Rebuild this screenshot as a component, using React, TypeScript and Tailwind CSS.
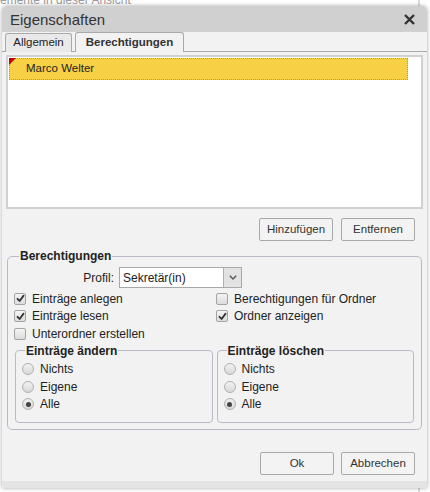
import React from 'react';

const font = { fontFamily: '"Liberation Sans", Arial, sans-serif' };

// Small check glyph used inside the checkboxes
const CheckMark = () => (
  <svg width="9" height="9" viewBox="0 0 9 9" className="block">
    <path d="M1.5 4.8 L3.6 7 L7.6 1.6" fill="none" stroke="#333" strokeWidth="1.8" strokeLinecap="round" strokeLinejoin="round" />
  </svg>
);

const Checkbox = ({ label, checked = false }: { label: string; checked?: boolean }) => (
  <label className="flex items-center gap-[6px] h-[17.5px] text-[12px] text-[#222]">
    <span className="w-[12px] h-[12px] rounded-[2px] border border-[#a4a4a4] bg-gradient-to-b from-[#f4f4f4] to-[#dcdcdc] flex items-center justify-center">
      {checked && <CheckMark />}
    </span>
    {label}
  </label>
);

const Radio = ({ label, checked = false }: { label: string; checked?: boolean }) => (
  <label className="flex items-center gap-[6px] h-[17.5px] text-[12px] text-[#222]">
    <span className="w-[12px] h-[12px] rounded-full border border-[#b0b0b0] bg-gradient-to-b from-[#f2f2f2] to-[#d8d8d8] flex items-center justify-center">
      {checked && <span className="w-[5px] h-[5px] rounded-full bg-[#444]" />}
    </span>
    {label}
  </label>
);

const Button = ({ children }: { children: React.ReactNode }) => (
  <button
    type="button"
    className="w-[74px] h-[23px] border border-[#a8a8a8] rounded-[2px] bg-[#f3f3f3] text-[11.5px] text-[#333]"
  >
    {children}
  </button>
);

const RadioGroup = ({ title }: { title: string }) => (
  <fieldset className="flex-1 border border-[#b9b9c9] rounded-[4px] pl-[6px] h-[79px]">
    <legend className="ml-[3px] px-[1px] text-[12px] font-bold text-[#222] leading-[14px]">{title}</legend>
    <div className="flex flex-col mt-[3px]">
      <Radio label="Nichts" />
      <Radio label="Eigene" />
      <Radio label="Alle" checked />
    </div>
  </fieldset>
);

export default function App() {
  return (
    <div className="relative w-[430px] h-[492px] bg-white overflow-hidden" style={font}>
      {/* page behind the dialog */}
      <div className="absolute left-0 top-[-7px] text-[12px] leading-[14px] text-[#9a9a9a]">emente in dieser Ansicht</div>
      <div className="absolute left-[418px] top-0 w-[2px] h-[492px] bg-[#dcdcdc]" />

      {/* dialog */}
      <div className="absolute left-[2px] top-[6px] w-[425px] h-[482px] flex flex-col bg-[#f2f2f2] rounded-t-[5px] shadow-[0_0_4px_rgba(0,0,0,0.35)] overflow-hidden">
        {/* title bar */}
        <div className="h-[26px] shrink-0 flex items-center justify-between pl-[8px] pr-[12px] bg-[#d0d0d0]">
          <span className="text-[15px] text-[#333] leading-none">Eigenschaften</span>
          <svg width="11" height="11" viewBox="0 0 11 11">
            <path d="M1 1 L10 10 M10 1 L1 10" stroke="#333" strokeWidth="2.4" />
          </svg>
        </div>

        {/* tabs */}
        <div className="h-[20px] shrink-0 flex items-end gap-[3px] pl-[3px] border-b border-[#a9a9a9]">
          <div className="h-[19px] w-[67px] flex items-center justify-center border border-b-0 border-[#a9a9a9] rounded-t-[3px] bg-[#e9e9e9] text-[11.5px] text-[#222] mb-[-1px] pb-[1px]">
            Allgemein
          </div>
          <div className="h-[20px] w-[109px] flex items-center justify-center border border-b-0 border-[#a9a9a9] rounded-t-[3px] bg-[#f2f2f2] text-[11.5px] font-bold text-[#333] mb-[-1px]">
            Berechtigungen
          </div>
        </div>

        {/* body */}
        <div className="flex-1 flex flex-col px-[4px] pt-[3px]">
          <div className="h-[154px] border-2 border-[#d0d0d0] bg-white p-[1px] pr-[13px]">
            <div className="relative h-[22px] flex items-center pl-[16px] bg-[#f7d046] border border-dotted border-[#c9a200] text-[11.5px] text-[#222]">
              <span className="absolute left-[-1px] top-[-1px] w-0 h-0 border-t-[7px] border-t-[#c00000] border-r-[7px] border-r-transparent" />
              Marco Welter
            </div>
          </div>

          <div className="flex justify-end gap-[8px] mt-[9px] pr-[8px]">
            <Button>Hinzufügen</Button>
            <Button>Entfernen</Button>
          </div>

          <fieldset className="mt-[8px] mx-[1px] border border-[#b9b9c9] rounded-[5px] px-[6px] h-[181px]">
            <legend className="ml-[5px] px-[1px] text-[12px] font-bold text-[#222] leading-[14px]">Berechtigungen</legend>
            <div className="flex items-center h-[21px] mt-[4px] mb-[2px]">
              <span className="w-[105px] text-right pr-[5px] text-[12px] text-[#222]">Profil:</span>
              <div className="flex w-[123px] h-[21px] border border-[#a8a8a8] bg-white">
                <span className="flex-1 flex items-center pl-[3px] text-[12px] text-[#222]">Sekretär(in)</span>
                <span className="w-[18px] flex items-center justify-center border-l border-[#b0b0b0] bg-[#e2e2e2]">
                  <svg width="8" height="5" viewBox="0 0 8 5">
                    <path d="M0.8 0.8 L4 4 L7.2 0.8" fill="none" stroke="#555" strokeWidth="1.4" />
                  </svg>
                </span>
              </div>
            </div>
            <div className="grid grid-cols-[202px_1fr]">
              <Checkbox label="Einträge anlegen" checked />
              <Checkbox label="Berechtigungen für Ordner" />
              <Checkbox label="Einträge lesen" checked />
              <Checkbox label="Ordner anzeigen" checked />
              <Checkbox label="Unterordner erstellen" />
            </div>
            <div className="flex gap-[4px] mt-[1px] pl-[1px] pr-[1px]">
              <RadioGroup title="Einträge ändern" />
              <RadioGroup title="Einträge löschen" />
            </div>
          </fieldset>

          <div className="flex justify-end gap-[7px] mt-[22px] pr-[8px]">
            <Button>Ok</Button>
            <Button>Abbrechen</Button>
          </div>
        </div>

        {/* bottom band */}
        <div className="h-[7px] shrink-0 bg-[#e4e4e4]" />
      </div>
    </div>
  );
}
